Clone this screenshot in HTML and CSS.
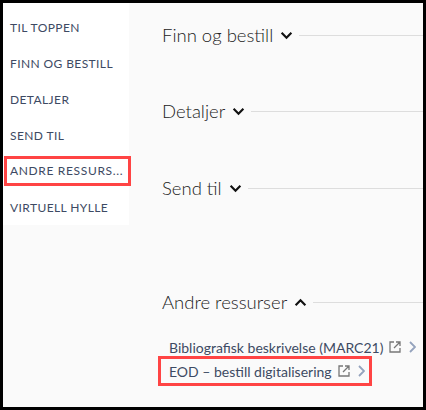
FILE: index.html

```html
<!DOCTYPE html>
<html lang="en">
<head>
	<meta charset="UTF-8">
	<title>Andre ressurser</title>
	<link rel="stylesheet" href="styles.css">
</head>
<body>
	<div id="frame">
		<div id="sideNav">
			<div class="navItem">TIL TOPPEN</div>
			<div class="navItem">FINN OG BESTILL</div>
			<div class="navItem">DETALJER</div>
			<div class="navItem">SEND TIL</div>
			<div class="navItem marked">ANDRE RESSURS...</div>
			<div class="navItem">VIRTUELL HYLLE</div>
		</div>
		<div id="main">
			<div class="section">
				<span class="title">Finn og bestill</span>
				<svg class="chev" viewBox="0 0 12 8"><path d="M1.500 1.500L6 6l4.500-4.500"/></svg>
				<span class="rule"></span>
			</div>
			<div class="section">
				<span class="title">Detaljer</span>
				<svg class="chev" viewBox="0 0 12 8"><path d="M1.500 1.500L6 6l4.500-4.500"/></svg>
				<span class="rule"></span>
			</div>
			<div class="section send">
				<span class="title">Send til</span>
				<svg class="chev" viewBox="0 0 12 8"><path d="M1.500 1.500L6 6l4.500-4.500"/></svg>
				<span class="rule"></span>
			</div>
			<div class="section last">
				<span class="title">Andre ressurser</span>
				<svg class="chev" viewBox="0 0 12 8"><path d="M1.500 6.500L6 2l4.500 4.500"/></svg>
				<span class="rule"></span>
			</div>
			<div class="links">
				<div class="link">
					<span>Bibliografisk beskrivelse (MARC21)</span>
					<svg class="ext" viewBox="0 0 12 12"><path d="M5 1H1v10h10V7M7 1h4v4M11 1L5 7"/></svg>
					<svg class="arrow" viewBox="0 0 7 12"><path d="M1 1l5 5-5 5"/></svg>
				</div>
				<div class="link marked">
					<span>EOD – bestill digitalisering</span>
					<svg class="ext" viewBox="0 0 12 12"><path d="M5 1H1v10h10V7M7 1h4v4M11 1L5 7"/></svg>
					<svg class="arrow" viewBox="0 0 7 12"><path d="M1 1l5 5-5 5"/></svg>
				</div>
			</div>
		</div>
	</div>
</body>
</html>
```

FILE: styles.css

```css
* {
	padding:0;
	margin:0;
	box-sizing:border-box;
}
html, body {
	width:426px;
	height:410px;
	overflow:hidden;
}
#frame {
	display:flex;
	align-items:flex-start;
	width:426px;
	height:410px;
	border:3px solid #000;
	background:#fafafa;
	font-family:Lato, "Noto Sans", sans-serif;
	color:#3d4a63;
}
#sideNav {
	flex:none;
	width:126px;
	height:222px;
	padding-top:7px;
	background:#fff;
}
.navItem {
	height:36px;
	line-height:36px;
	padding-left:7px;
	font-size:12px;
	letter-spacing:.4px;
	white-space:nowrap;
}
.navItem.marked {
	margin:2px -2px 4px 1px;
	height:30px;
	line-height:24px;
	padding:0 0 0 3px;
	width:127px;
	border:3px solid #f44;
	letter-spacing:.65px;
}
#main {
	flex:1;
	padding:19px 0 0 33px;
	min-width:0;
}
.section {
	display:flex;
	align-items:center;
	height:26px;
	margin-bottom:50px;
}
.section.send {
	margin-top:51px;
}
.section.last {
	margin:88px 0 0;
}
.title {
	font-size:18.500px;
	font-weight:300;
	color:#222;
	white-space:nowrap;
}
.chev {
	flex:none;
	width:13px;
	height:9px;
	margin:0 6px 0 7px;
	fill:none;
	stroke:#111;
	stroke-width:2;
}
.rule {
	flex:1;
	height:1px;
	background:#ddd;
}
.links {
	margin-top:20px;
	font-size:14px;
	color:#3d4a63;
}
.link {
	display:flex;
	align-items:center;
	height:24px;
	padding-left:7px;
	white-space:nowrap;
}
.link.marked {
	width:214px;
	height:30px;
	margin:-3px 0 0 -4px;
	padding-left:8px;
	border:3px solid #f44;
}
.ext {
	flex:none;
	width:12px;
	height:12px;
	margin-left:6px;
	fill:none;
	stroke:#777;
	stroke-width:1.300;
}
.arrow {
	flex:none;
	width:7px;
	height:12px;
	margin-left:8px;
	fill:none;
	stroke:#94a3bd;
	stroke-width:1.800;
}
```
